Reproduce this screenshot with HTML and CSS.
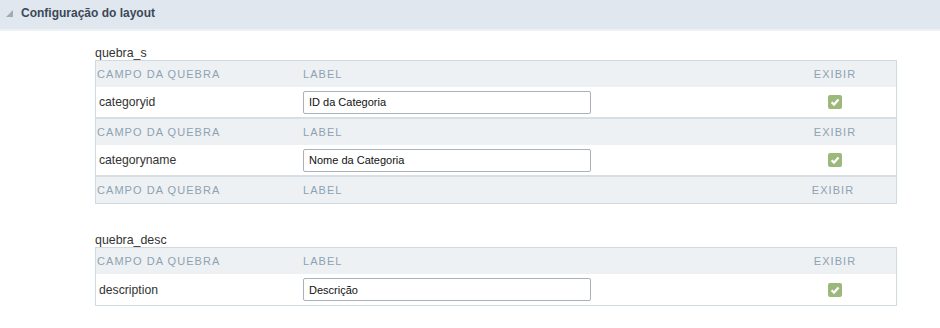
FILE: index.html
```html
<!DOCTYPE html>
<html lang="pt">
<head>
<meta charset="utf-8">
<title>Configuração do layout</title>
<link rel="stylesheet" href="styles.css">
</head>
<body>
<div class="panel-title">
  <svg class="tri" width="7" height="7" viewBox="0 0 7 7"><polygon points="7,0 7,7 0,7" fill="#a2abb5"/></svg>
  <span>Configuração do layout</span>
</div>
<div class="content">
  <div class="block">
    <div class="block-label">quebra_s</div>
    <div class="grid-table">
      <div class="row head"><div class="c1">CAMPO DA QUEBRA</div><div class="c2">LABEL</div><div class="c3">EXIBIR</div></div>
      <div class="row data"><div class="c1">categoryid</div><div class="c2"><input class="inp" type="text" value="ID da Categoria"></div><div class="c3"><svg class="chk" width="14" height="14" viewBox="0 0 14 14"><rect width="14" height="14" rx="2" fill="#9cb97b"/><path d="M3.6 7.3 L6 9.6 L10.5 4.6" fill="none" stroke="#fff" stroke-width="2.2"/></svg></div></div>
      <div class="row head"><div class="c1">CAMPO DA QUEBRA</div><div class="c2">LABEL</div><div class="c3">EXIBIR</div></div>
      <div class="row data"><div class="c1">categoryname</div><div class="c2"><input class="inp" type="text" value="Nome da Categoria"></div><div class="c3"><svg class="chk" width="14" height="14" viewBox="0 0 14 14"><rect width="14" height="14" rx="2" fill="#9cb97b"/><path d="M3.6 7.3 L6 9.6 L10.5 4.6" fill="none" stroke="#fff" stroke-width="2.2"/></svg></div></div>
      <div class="row head last"><div class="c1">CAMPO DA QUEBRA</div><div class="c2">LABEL</div><div class="c3 shift">EXIBIR</div></div>
    </div>
  </div>
  <div class="block second">
    <div class="block-label">quebra_desc</div>
    <div class="grid-table">
      <div class="row head"><div class="c1">CAMPO DA QUEBRA</div><div class="c2">LABEL</div><div class="c3">EXIBIR</div></div>
      <div class="row data last"><div class="c1">description</div><div class="c2"><input class="inp" type="text" value="Descrição"></div><div class="c3"><svg class="chk" width="14" height="14" viewBox="0 0 14 14"><rect width="14" height="14" rx="2" fill="#9cb97b"/><path d="M3.6 7.3 L6 9.6 L10.5 4.6" fill="none" stroke="#fff" stroke-width="2.2"/></svg></div></div>
    </div>
  </div>
</div>
</body>
</html>
```
FILE: styles.css
```css
* { box-sizing: border-box; }
body {
  margin: 0;
  background: #fff;
  font-family: "Liberation Sans", Arial, sans-serif;
  color: #333;
}
.panel-title {
  height: 31px;
  background: #e1e7ee;
  border-bottom: 2px solid #edf0f4;
  display: flex;
  align-items: center;
  padding-left: 6px;
  padding-bottom: 3px;
}
.tri { margin-right: 8px; margin-top: 1px; }
.panel-title span {
  font-size: 12px;
  font-weight: bold;
  color: #3c4859;
}
.content {
  padding: 15px 0 0 95px;
}
.block { width: 802px; }
.block.second { margin-top: 29px; }
.block-label {
  font-size: 12.4px;
  line-height: 14px;
  color: #333;
}
.grid-table {
  border: 1px solid #d0dae1;
}
.row {
  display: grid;
  grid-template-columns: 207px 1fr 122px;
  align-items: center;
}
.row.head {
  height: 26px;
  background: #edf1f4;
  font-size: 11px;
  letter-spacing: 1.05px;
  color: #8da2b2;
}
.row.head .c1 { padding-left: 1px; }
.row.head .c3 { text-align: center; }
.row.head .c3.shift { padding-right: 4px; }
.row.data {
  height: 32px;
  background: #fff;
  border-bottom: 2px solid #d7dfe5;
  font-size: 12.2px;
}
.row.data.last { border-bottom: none; height: 31px; }
.row.data .c1 { padding-left: 3px; }
.row.data .c3 { display: flex; justify-content: center; }
.inp {
  width: 288px;
  height: 23px;
  border: 1px solid #a9b1bb;
  border-radius: 2px;
  padding: 0 5px;
  font-family: "Liberation Sans", Arial, sans-serif;
  font-size: 11px;
  color: #111;
  background: #fff;
  outline: none;
  display: block;
}
.chk { display: block; }
```
